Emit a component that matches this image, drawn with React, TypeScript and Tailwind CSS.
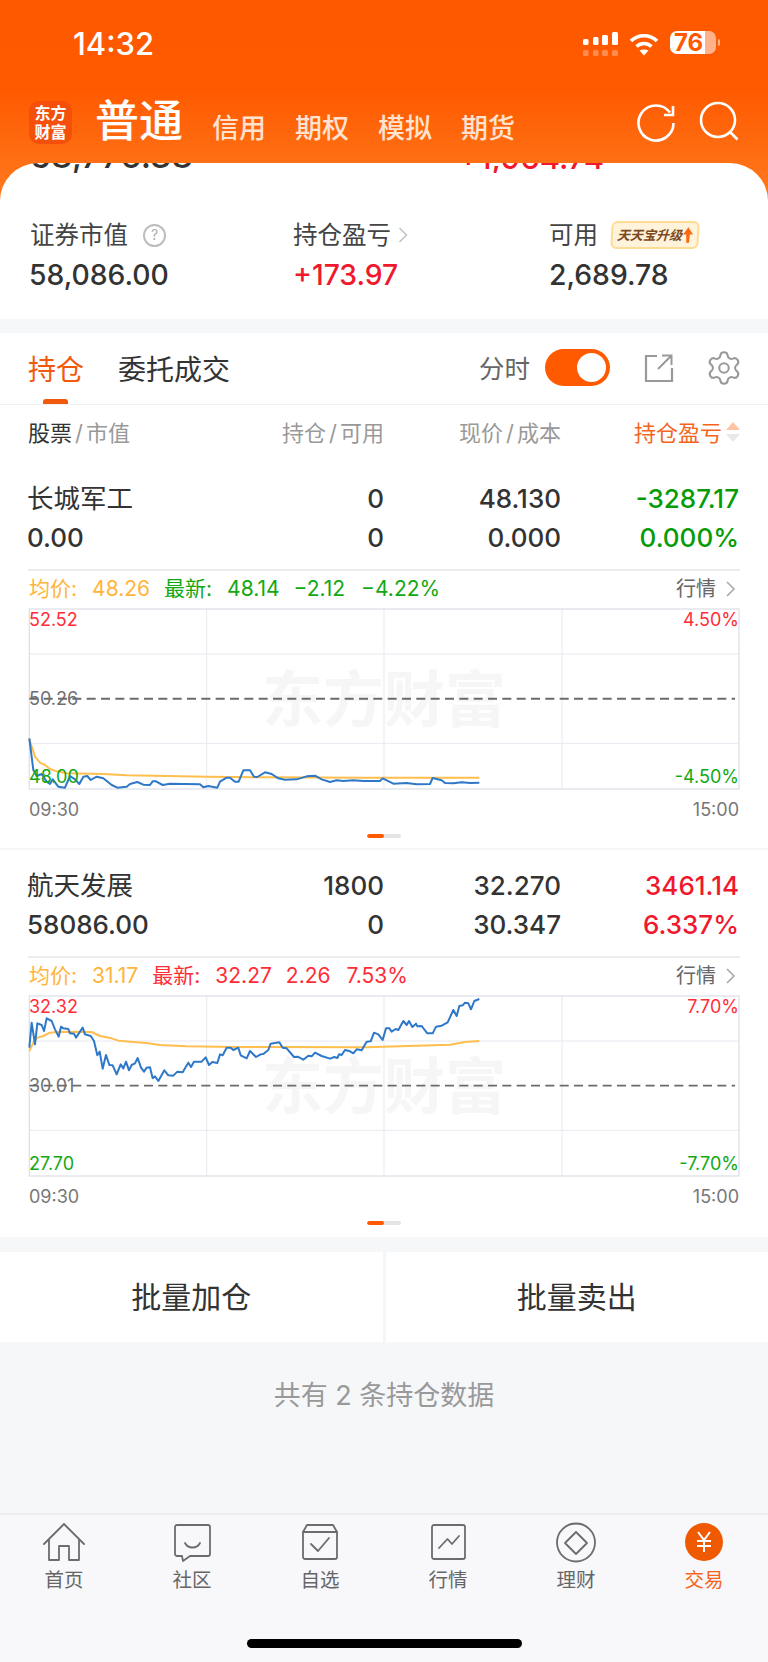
import React from "react";
import { Settings } from "lucide-react";

const blue1 = "88,415 100,510 110,528 125,522 140,545 150,552 158,538 175,560 195,563 210,528 225,538 238,552 250,530 262,528 272,540 290,530 310,535 335,555 352,563 380,560 390,552 412,546 430,554 450,555 458,544 468,544 488,555 510,551 600,553 610,562 625,558 652,563 660,545 680,533 690,533 705,545 716,545 730,511 750,511 762,530 772,531 795,517 815,522 835,535 855,539 890,538 920,529 945,527 965,538 990,546 1010,541 1030,543 1060,541 1090,543 1140,543 1148,535 1180,551 1220,549 1250,553 1290,552 1298,534 1325,541 1335,549 1360,550 1385,547 1410,549 1438,548";
const avg1 = "88,418 105,470 120,488 135,495 150,507 170,514 200,520 310,522 380,526 500,528 620,530 800,532 1100,533 1438,533";
const blue2 = "88,205 95,130 105,195 112,132 125,137 132,155 140,117 155,125 165,150 176,172 183,142 190,147 205,149 210,162 222,163 228,175 248,145 255,165 272,170 282,185 292,228 299,217 308,268 318,227 328,257 338,258 350,285 362,255 370,267 378,247 387,273 395,257 405,252 413,236 423,265 432,277 440,265 450,264 458,297 465,291 475,305 493,273 505,288 520,289 532,277 548,279 565,250 573,263 582,247 605,247 617,234 627,257 637,248 652,251 660,225 668,228 680,205 692,205 700,212 715,205 722,228 740,237 750,215 768,233 782,225 790,224 805,212 812,193 838,189 848,205 860,207 882,233 893,232 910,241 925,229 935,231 945,220 965,230 990,238 1003,233 1012,236 1017,225 1025,227 1035,212 1050,216 1060,222 1070,210 1085,213 1100,187 1112,186 1122,160 1135,165 1148,182 1158,147 1168,147 1175,157 1187,149 1195,152 1210,125 1220,137 1227,125 1237,143 1248,133 1252,141 1265,140 1282,162 1298,162 1308,142 1325,139 1343,129 1360,92 1370,110 1378,80 1388,78 1395,70 1405,72 1413,90 1423,65 1438,59";
const avg2 = "88,215 100,190 112,175 130,170 150,160 180,157 275,158 300,170 335,177 355,184 400,188 440,191 480,197 560,201 700,203 1100,204 1200,201 1350,196 1395,188 1438,185";

type ChartProps = {
  dy: number;
  blue: string;
  avg: string;
  high: string;
  mid: string;
  low: string;
  hp: string;
  lp: string;
  dash: number;
};

function Chart({ dy, blue, avg, high, mid, low, hp, lp, dash }: ChartProps) {
  const top = 27 + dy;
  const bottom = 567 + dy;
  return (
    <div className="relative mx-[28px] h-[182px] w-[712px] text-[18px] leading-none">
      <div className="absolute left-[234px] top-[56px] text-[61px] font-bold leading-[72px] text-[#f6f6f6]">东方财富</div>
      <svg className="absolute inset-0" width="712" height="182" viewBox={`84 ${24 + dy} 2136 546`} fill="none">
        {[162, 430].map((y) => (
          <line key={y} x1="88" x2="2217" y1={y + dy} y2={y + dy} stroke="#e8e9f0" strokeWidth="3" />
        ))}
        {[620, 1152, 1686].map((x) => (
          <line key={x} x1={x} x2={x} y1={top} y2={bottom} stroke="#e8e9f0" strokeWidth="3" />
        ))}
        <rect x="88" y={top} width="2129" height={bottom - top} stroke="#dfe1ea" strokeWidth="4" />
        <line x1="88" x2="2205" y1={296 + dy} y2={296 + dy} stroke="#6b6b6b" strokeWidth={dash} strokeDasharray="27 16" />
        <polyline points={avg} stroke="#ffbe4d" strokeWidth="6" strokeLinejoin="round" />
        <polyline points={blue} stroke="#2f78c8" strokeWidth="6" strokeLinejoin="round" />
      </svg>
      <span className="absolute left-[1px] top-[3px] text-[#ff2d37]">{high}</span>
      <span className="absolute left-[1px] top-[82px] text-[#6f6f6f]">{mid}</span>
      <span className="absolute left-[1px] top-[160px] text-[#12a812]">{low}</span>
      <span className="absolute right-[1px] top-[3px] text-[#ff2d37]">{hp}</span>
      <span className="absolute right-[1px] top-[160px] text-[#12a812]">{lp}</span>
    </div>
  );
}

type StockProps = {
  name: string;
  value: string;
  hold: string;
  avail: string;
  price: string;
  cost: string;
  pl: string;
  plp: string;
  plColor: string;
  avgp: string;
  last: string;
  chg: string;
  pct: string;
  lastColor: string;
  chart: ChartProps;
};

function Stock(s: StockProps) {
  return (
    <section className="bg-white">
      <div className="grid grid-cols-[237px_120px_177px_178px] pl-[27px] pr-[29px] pt-[16px] text-[26px] font-medium leading-[39px] text-[#333]">
        <span className="text-[26.5px] font-normal">{s.name}</span>
        <span className="text-right">{s.hold}</span>
        <span className="text-right">{s.price}</span>
        <span className={`text-right ${s.plColor}`}>{s.pl}</span>
        <span>{s.value}</span>
        <span className="text-right">{s.avail}</span>
        <span className="text-right">{s.cost}</span>
        <span className={`text-right ${s.plColor}`}>{s.plp}</span>
      </div>
      <div className="mx-[28px] mt-[12px] h-[2px] bg-[#ececf0]" />
      <div className="flex h-[37px] items-center pb-[2px] pl-[29px] pr-[32px] text-[21px] leading-none">
        <span className="text-[#ffb53c]">均价:</span>
        <span className="ml-[15px] text-[#ffb53c]">{s.avgp}</span>
        <span className={`ml-[14px] ${s.lastColor}`}>最新:</span>
        <span className={`ml-[15px] ${s.lastColor}`}>{s.last}</span>
        <span className={`ml-[14px] ${s.lastColor}`}>{s.chg}</span>
        <span className={`ml-[16px] ${s.lastColor}`}>{s.pct}</span>
        <span className="ml-auto text-[20px] text-[#666]">行情</span>
        <svg className="ml-[9px]" width="11" height="18" viewBox="0 0 11 18" fill="none">
          <path d="M2 2 L9 9 L2 16" stroke="#aaa" strokeWidth="1.6" />
        </svg>
      </div>
      <Chart {...s.chart} />
      <div className="flex h-[40px] items-center justify-between pl-[29px] pr-[29px] text-[18px] leading-none text-[#777]">
        <span>09:30</span>
        <span>15:00</span>
      </div>
      <div className="flex h-[18px] justify-center pt-[4px]">
        <div className="flex h-[4px] w-[34px] overflow-hidden rounded-full bg-[#e4e4e4]">
          <div className="h-full w-[17px] rounded-full bg-[#ff5a00]" />
        </div>
      </div>
    </section>
  );
}

const Ico = ({ children }: { children: React.ReactNode }) => (
  <svg width="44" height="44" viewBox="0 0 44 44" fill="none" stroke="#6c6c6c" strokeWidth="1.8" strokeLinejoin="round" strokeLinecap="round">
    {children}
  </svg>
);

const tabs: { label: string; icon: React.ReactNode; active?: boolean }[] = [
  { label: "首页", icon: <Ico><path d="M2 23 L22 3 L42 23" /><path d="M7 19 V39 H17 V25 H27 V39 H37 V19" /></Ico> },
  { label: "社区", icon: <Ico><path d="M7 4 H38 a2 2 0 0 1 2 2 V33 a2 2 0 0 1 -2 2 H20 L13 40 L12 35 H7 a2 2 0 0 1 -2 -2 V6 a2 2 0 0 1 2 -2 Z" /><path d="M15 22 C18 28 27 28 30 22" /></Ico> },
  { label: "自选", icon: <Ico><path d="M5 11 L9 4 H35 L39 11 V36 a2 2 0 0 1 -2 2 H7 a2 2 0 0 1 -2 -2 Z" /><path d="M5 11 H39" /><path d="M13 23 L20 30 L31 17" /></Ico> },
  { label: "行情", icon: <Ico><rect x="6" y="4" width="33" height="34" rx="2" /><path d="M13 27 L21.5 18 L26 23 L33 15" /></Ico> },
  { label: "理财", icon: <Ico><circle cx="22" cy="21.5" r="19" /><path d="M22 11 L33 22 L22 33 L11 22 Z" /></Ico> },
  {
    label: "交易",
    active: true,
    icon: (
      <svg width="44" height="44" viewBox="0 0 44 44" fill="none">
        <circle cx="22" cy="21" r="19" fill="#ef5a00" />
        <path d="M16 11 L22 19 L28 11 M15 20 H29 M15 25 H29 M22 19 V31" stroke="#fff" strokeWidth="2" />
      </svg>
    ),
  },
];

export default function App() {
  return (
    <div className="flex h-[1662px] w-[768px] flex-col overflow-hidden bg-[#f6f7f9] font-['Inter','Noto_Sans_CJK_SC',sans-serif]">
      <div className="h-[319px] bg-[linear-gradient(180deg,#ff5900_0px,#ff5a00_90px,#ff7a1f_200px)]">
        <div className="flex h-[86px] items-start">
          <span className="ml-[73px] mt-[26px] text-[31px] font-medium leading-[36px] text-white">14:32</span>
          <div className="ml-auto mr-[48px] mt-[31px] flex items-start">
            <svg width="36" height="26" viewBox="0 0 36 26" fill="#fff">
              <rect x="0" y="8" width="5.5" height="6" rx="1.5" />
              <rect x="10" y="6" width="5.5" height="8" rx="1.5" />
              <rect x="19" y="4" width="6" height="10" rx="1.5" />
              <rect x="29" y="1" width="6" height="13" rx="1.5" />
              <g opacity="0.3">
                <rect x="0" y="19" width="5.5" height="6" rx="1.5" />
                <rect x="10" y="19" width="5.5" height="6" rx="1.5" />
                <rect x="19" y="19" width="6" height="6" rx="1.5" />
                <rect x="29" y="19" width="6" height="6" rx="1.5" />
              </g>
            </svg>
            <svg className="ml-[10px] mt-[2px]" width="30" height="23" viewBox="0 0 30 23" fill="none" stroke="#fff" strokeWidth="3.6">
              <path d="M2 8 C9 1 21 1 28 8" />
              <path d="M7.5 13.5 C12 9.5 18 9.5 22.5 13.5" />
              <path d="M10.5 17.5 C13 16 17 16 19.5 17.5 L15 22.5 Z" fill="#fff" stroke="none" />
            </svg>
            <div className="ml-[11px] flex h-[23px] w-[46px] items-center justify-center rounded-[7px] bg-[linear-gradient(90deg,#fff_76%,#ffb28a_76%)] pr-[9px] text-[24px] font-bold leading-none text-[#ff5900]">
              76
            </div>
            <div className="ml-[2px] mt-[8px] h-[7px] w-[2px] rounded-r-full bg-[#ffb28a]" />
          </div>
        </div>
        <div className="flex h-[77px] items-start text-white">
          <div className="ml-[29px] mt-[15px] flex h-[43px] w-[43px] flex-col items-center justify-center rounded-[10px] bg-[#f4500c] text-[16px] font-bold leading-[19px]">
            <span>东方</span>
            <span>财富</span>
          </div>
          <span className="ml-[23px] mt-[13px] text-[44px] font-medium leading-[44px]">普通</span>
          <div className="ml-[29px] mt-[25px] flex gap-[29px] text-[27px] font-medium leading-[36px] text-[#ffe3d0]">
            <span>信用</span>
            <span>期权</span>
            <span>模拟</span>
            <span>期货</span>
          </div>
          <div className="ml-auto mr-[28px] mt-[16px] flex gap-[22px]">
            <svg width="40" height="40" viewBox="0 0 40 40" fill="none" stroke="#fff" strokeWidth="2.6">
              <path d="M37.5 21 A17.5 17.5 0 1 1 34 10.5" />
              <path d="M37 4 V13 H28" />
            </svg>
            <svg className="-mt-[2px]" width="42" height="42" viewBox="0 0 42 42" fill="none" stroke="#fff" strokeWidth="2.6">
              <circle cx="20" cy="20" r="17" />
              <path d="M32 32 L39.5 39.5" />
            </svg>
          </div>
        </div>
        <div className="h-[156px] overflow-hidden rounded-t-[38px] bg-white">
          <div className="flex h-[10px] items-end overflow-hidden pl-[30px] font-medium leading-none">
            <span className="w-[428px] text-[34px] text-[#333]">58,776.38</span>
            <span className="text-[31px] text-[#f0182d]">+1,964.74</span>
          </div>
          <div className="mt-[47px] grid grid-cols-[263px_256px_1fr] pl-[30px]">
            <div className="flex h-[30px] items-center text-[24.5px] leading-none text-[#444]">
              <span>证券市值</span>
              <span className="ml-[15px] flex h-[23px] w-[23px] items-center justify-center rounded-full border-2 border-[#bdbdbd] text-[14px] text-[#aaa]">?</span>
            </div>
            <div className="flex h-[30px] items-center text-[24.5px] leading-none text-[#444]">
              <span>持仓盈亏</span>
              <svg className="ml-[7px]" width="10" height="18" viewBox="0 0 10 18" fill="none">
                <path d="M1.5 2 L8.5 9 L1.5 16" stroke="#c4c4c4" strokeWidth="1.6" />
              </svg>
            </div>
            <div className="flex h-[30px] items-center text-[24.5px] leading-none text-[#444]">
              <span>可用</span>
              <div className="ml-[13px] flex h-[28px] w-[88px] -skew-x-3 items-center justify-center whitespace-nowrap rounded-[6px] border-2 border-[#ffdc93] bg-[#fff3dc] text-[13px] font-bold italic leading-none text-[#7b4a1e]">
                <span>天天宝升级</span>
                <svg className="ml-[1px]" width="10" height="16" viewBox="0 0 11 17">
                  <path d="M5.5 0 L11 8 H7.5 L7 17 H4 L3.5 8 H0 Z" fill="#fb6a12" />
                </svg>
              </div>
            </div>
            <span className="-ml-[1px] mt-[8px] text-[28.3px] font-medium leading-[34px] text-[#333]">58,086.00</span>
            <span className="mt-[8px] text-[28.3px] font-medium leading-[34px] text-[#f0182d]">+173.97</span>
            <span className="mt-[8px] text-[28.3px] font-medium leading-[34px] text-[#333]">2,689.78</span>
          </div>
        </div>
      </div>

      <div className="mt-[14px] flex h-[72px] items-center border-b border-[#f0f0f2] bg-white pb-[2px] pl-[28px] pr-[25px]">
        <div className="relative translate-y-[2px] text-[28px] leading-none text-[#f15a0c]">
          持仓
          <div className="absolute left-[15px] top-[43px] h-[5px] w-[25px] rounded-t-[3px] bg-[#f15a0c]" />
        </div>
        <span className="ml-[34px] translate-y-[2px] text-[28px] leading-none text-[#333]">委托成交</span>
        <span className="ml-auto translate-y-[1px] text-[25.5px] leading-none text-[#666]">分时</span>
        <div className="ml-[15px] flex h-[37px] w-[65px] items-center justify-end rounded-full bg-[#ff5a00] pr-[4px]">
          <div className="h-[29px] w-[29px] rounded-full bg-white" />
        </div>
        <svg className="ml-[34px]" width="30" height="30" viewBox="0 0 30 30" fill="none" stroke="#999" strokeWidth="2.2">
          <path d="M13 3 H2 V28 H28 V15" />
          <path d="M14 16 L27 3 M18 2.5 H27.5 V12" strokeWidth="2" />
        </svg>
        <Settings className="ml-[31px]" size={38} strokeWidth={1.3} color="#999" />
      </div>

      <div className="grid h-[58px] grid-cols-[236px_120px_177px_178px] items-center bg-white pb-[2px] pl-[28px] pr-[29px] text-[22px] leading-none text-[#999]">
        <span>
          <span className="text-[#333]">股票</span>
          <span className="px-[3px]">/</span>市值
        </span>
        <span className="text-right">
          持仓<span className="px-[3px]">/</span>可用
        </span>
        <span className="text-right">
          现价<span className="px-[3px]">/</span>成本
        </span>
        <span className="relative pr-[17px] text-right text-[#f4651b]">
          持仓盈亏
          <svg className="absolute right-[-2px] top-[-2px]" width="16" height="24" viewBox="0 0 16 24">
            <path d="M8 2 L15 10 H1 Z" fill="#ffc4a4" />
            <path d="M8 22 L15 14 H1 Z" fill="#e8e8e8" />
          </svg>
        </span>
      </div>

      <Stock
        name="长城军工"
        value="0.00"
        hold="0"
        avail="0"
        price="48.130"
        cost="0.000"
        pl="-3287.17"
        plp="0.000%"
        plColor="text-[#079c07]"
        avgp="48.26"
        last="48.14"
        chg="−2.12"
        pct="−4.22%"
        lastColor="text-[#12a812]"
        chart={{ dy: 0, blue: blue1, avg: avg1, high: "52.52", mid: "50.26", low: "48.00", hp: "4.50%", lp: "-4.50%", dash: 6 }}
      />
      <div className="h-[2px] bg-[#f5f6f8]" />
      <Stock
        name="航天发展"
        value="58086.00"
        hold="1800"
        avail="0"
        price="32.270"
        cost="30.347"
        pl="3461.14"
        plp="6.337%"
        plColor="text-[#f0182d]"
        avgp="31.17"
        last="32.27"
        chg="2.26"
        pct="7.53%"
        lastColor="text-[#ff2d37]"
        chart={{ dy: 23, blue: blue2, avg: avg2, high: "32.32", mid: "30.01", low: "27.70", hp: "7.70%", lp: "-7.70%", dash: 5 }}
      />
      <div className="h-[2px] bg-white" />

      <div className="mt-[15px] flex h-[90px] bg-white text-[30px] leading-none text-[#333]">
        <div className="flex flex-1 items-center justify-center">批量加仓</div>
        <div className="w-[3px] bg-[#f5f6f8]" />
        <div className="flex flex-1 items-center justify-center">批量卖出</div>
      </div>

      <div className="flex h-[171px] justify-center pt-[36px] text-[27px] leading-[36px] text-[#999]">共有 2 条持仓数据</div>

      <nav className="flex-1 border-t-2 border-[#eeeef0] bg-[#f8f8fb] pt-[6px]">
        <div className="grid grid-cols-6">
          {tabs.map((t) => (
            <div key={t.label} className="flex flex-col items-center">
              {t.icon}
              <span className={`mt-[1px] text-[19.5px] leading-[28px] ${t.active ? "text-[#f4651b]" : "text-[#666]"}`}>{t.label}</span>
            </div>
          ))}
        </div>
        <div className="mx-auto mt-[45px] h-[9px] w-[275px] rounded-full bg-black" />
      </nav>
    </div>
  );
}
